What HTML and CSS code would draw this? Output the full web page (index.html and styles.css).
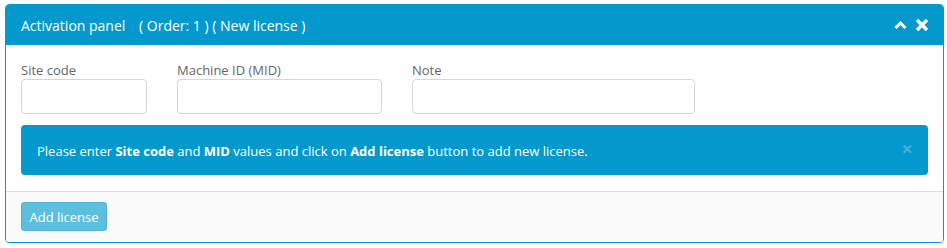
FILE: index.html
```html
<!DOCTYPE html>
<html lang="en">
<head>
    <meta charset="UTF-8">
    <title>Activation panel</title>
    <link rel="stylesheet" href="styles.css">
</head>
<body>
    <div class="panel">
        <div class="panel-heading">
            <span class="panel-title">Activation panel <span class="sub">( Order: 1 ) ( New license )</span></span>
            <span class="tools">
                <svg width="13" height="10" viewBox="0 0 13 10"><path d="M1.5 8 L6.5 3 L11.5 8" fill="none" stroke="#fff" stroke-width="3"/></svg>
                <svg width="14" height="14" viewBox="0 0 14 14"><path d="M2 2 L12 12 M12 2 L2 12" fill="none" stroke="#fff" stroke-width="3.4"/></svg>
            </span>
        </div>
        <div class="panel-body">
            <div class="row">
                <div class="field f-site">
                    <label>Site code</label>
                    <input type="text">
                </div>
                <div class="field f-mid">
                    <label>Machine ID (MID)</label>
                    <input type="text">
                </div>
                <div class="field f-note">
                    <label>Note</label>
                    <input type="text">
                </div>
            </div>
            <div class="alert">
                Please enter <b>Site code</b> and <b>MID</b> values and click on <b>Add license</b> button to add new license.
                <span class="close">&times;</span>
            </div>
        </div>
        <div class="panel-footer">
            <button class="btn">Add license</button>
        </div>
    </div>
</body>
</html>
```

FILE: styles.css
```css
body {
    font-family: 'Open Sans', sans-serif;
    font-size: 13px;
    color: #666;
    margin: 0;
    padding: 4px 3px 0 5px;
}
.panel {
    border: 1px solid #0399cc;
    border-radius: 4px;
    overflow: hidden;
}
.panel-heading {
    background-color: #0399cc;
    color: #fff;
    height: 40px;
    padding: 0 15px;
    display: flex;
    align-items: center;
    justify-content: space-between;
    font-size: 14px;
}
.panel-title .sub {
    margin-left: 10px;
}
.tools {
    display: flex;
    align-items: center;
    gap: 8px;
    margin-right: -1px;
}
.panel-body {
    background-color: #fff;
    padding: 16px 15px 16px 15px;
    border-bottom: 1px solid #ddd;
}
.row {
    display: flex;
    gap: 30px;
}
.field label {
    display: block;
    line-height: 18px;
}
.field input {
    display: block;
    box-sizing: border-box;
    height: 35px;
    border: 1px solid #d6d6d6;
    border-radius: 4px;
    padding: 6px 10px;
    font-family: inherit;
}
.f-site input { width: 126px; }
.f-mid input { width: 205px; }
.f-note input { width: 283px; }
.alert {
    position: relative;
    margin-top: 11px;
    background-color: #0399cc;
    color: #fff;
    border-radius: 4px;
    padding: 16px 16px 14px;
    line-height: 20px;
}
.alert .close {
    position: absolute;
    right: 15px;
    top: 14px;
    font-size: 20px;
    font-weight: bold;
    line-height: 20px;
    color: rgba(255, 255, 255, 0.25);
}
.panel-footer {
    background-color: #fafafa;
    padding: 10px 15px 11px;
}
.btn {
    font-family: inherit;
    font-size: 13px;
    color: #fff;
    background-color: #5bbfdd;
    border: 1px solid #4fb3d3;
    border-radius: 3px;
    height: 29px;
    width: 86px;
    padding: 0;
}
```
